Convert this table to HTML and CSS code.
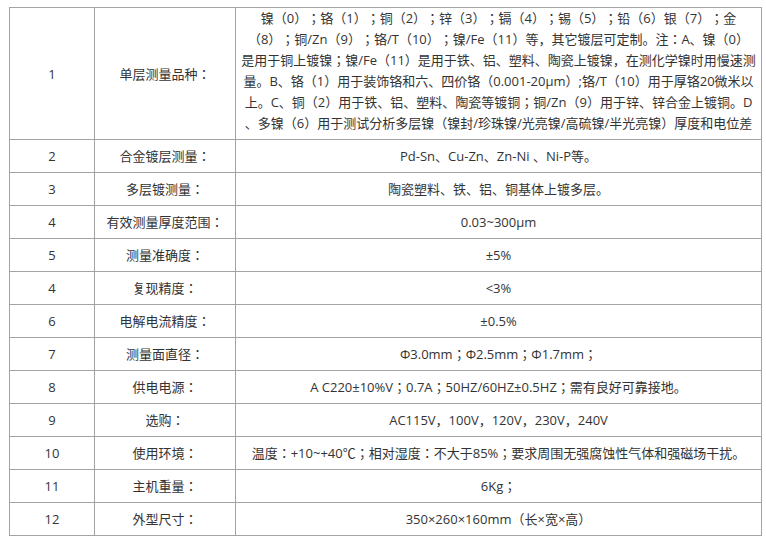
FILE: index.html
```html
<!DOCTYPE html>
<html>
<head>
<meta charset="utf-8">
<title>技术参数</title>
<link rel="stylesheet" href="styles.css">
</head>
<body>
<table class="spec">
  <colgroup>
    <col class="col-num">
    <col class="col-label">
    <col class="col-value">
  </colgroup>
  <tbody>
    <tr>
      <td class="num">1</td>
      <td class="label">单层测量品种：</td>
      <td class="value value-multi">镍（0）；铬（1）；铜（2）；锌（3）；镉（4）；锡（5）；铅（6）银（7）；金<br>（8）；铜/Zn（9）；铬/T（10）；镍/Fe（11）等，其它镀层可定制。注：A、镍（0）<br>是用于铜上镀镍；镍/Fe（11）是用于铁、铝、塑料、陶瓷上镀镍，在测化学镍时用慢速测<br>量。B、铬（1）用于装饰铬和六、四价铬（0.001-20μm）;铬/T（10）用于厚铬20微米以<br>上。C、铜（2）用于铁、铝、塑料、陶瓷等镀铜；铜/Zn（9）用于锌、锌合金上镀铜。D<br>、多镍（6）用于测试分析多层镍（镍封/珍珠镍/光亮镍/高硫镍/半光亮镍）厚度和电位差</td>
    </tr>
    <tr>
      <td class="num">2</td>
      <td class="label">合金镀层测量：</td>
      <td class="value">Pd-Sn、Cu-Zn、Zn-Ni 、Ni-P等。</td>
    </tr>
    <tr>
      <td class="num">3</td>
      <td class="label">多层镀测量：</td>
      <td class="value">陶瓷塑料、铁、铝、铜基体上镀多层。</td>
    </tr>
    <tr>
      <td class="num">4</td>
      <td class="label">有效测量厚度范围：</td>
      <td class="value">0.03~300μm</td>
    </tr>
    <tr>
      <td class="num">5</td>
      <td class="label">测量准确度：</td>
      <td class="value">±5%</td>
    </tr>
    <tr>
      <td class="num">4</td>
      <td class="label">复现精度：</td>
      <td class="value">&lt;3%</td>
    </tr>
    <tr>
      <td class="num">6</td>
      <td class="label">电解电流精度：</td>
      <td class="value">±0.5%</td>
    </tr>
    <tr>
      <td class="num">7</td>
      <td class="label">测量面直径：</td>
      <td class="value">Φ3.0mm；Φ2.5mm；Φ1.7mm；</td>
    </tr>
    <tr>
      <td class="num">8</td>
      <td class="label">供电电源：</td>
      <td class="value">A C220±10%V；0.7A；50HZ/60HZ±0.5HZ；需有良好可靠接地。</td>
    </tr>
    <tr>
      <td class="num">9</td>
      <td class="label">选购：</td>
      <td class="value">AC115V，100V，120V，230V，240V</td>
    </tr>
    <tr>
      <td class="num">10</td>
      <td class="label">使用环境：</td>
      <td class="value">温度：+10~+40℃；相对湿度：不大于85%；要求周围无强腐蚀性气体和强磁场干扰。</td>
    </tr>
    <tr>
      <td class="num">11</td>
      <td class="label">主机重量：</td>
      <td class="value">6Kg；</td>
    </tr>
    <tr>
      <td class="num">12</td>
      <td class="label">外型尺寸：</td>
      <td class="value">350×260×160mm（长×宽×高）</td>
    </tr>
  </tbody>
</table>
</body>
</html>
```

FILE: styles.css
```css
html, body {
  background: #ffffff;
}

body {
  margin: 7px 0 0 9px;
  font-family: "Open Sans", "Noto Sans CJK JP", "Noto Sans CJK SC", sans-serif;
  font-size: 13px;
  color: #333333;
  text-spacing-trim: space-all;
}

.spec {
  border-collapse: collapse;
  table-layout: fixed;
  width: 753px;
}

.col-num {
  width: 85px;
}

.col-label {
  width: 141px;
}

.spec td {
  border: 1px solid #a3a3a3;
  padding: 6px 1px 5px;
  line-height: 21px;
  text-align: center;
  vertical-align: middle;
  white-space: nowrap;
  text-spacing-trim: space-all;
}

.spec td.value-multi {
  padding: 0 1px 5px;
}
```
